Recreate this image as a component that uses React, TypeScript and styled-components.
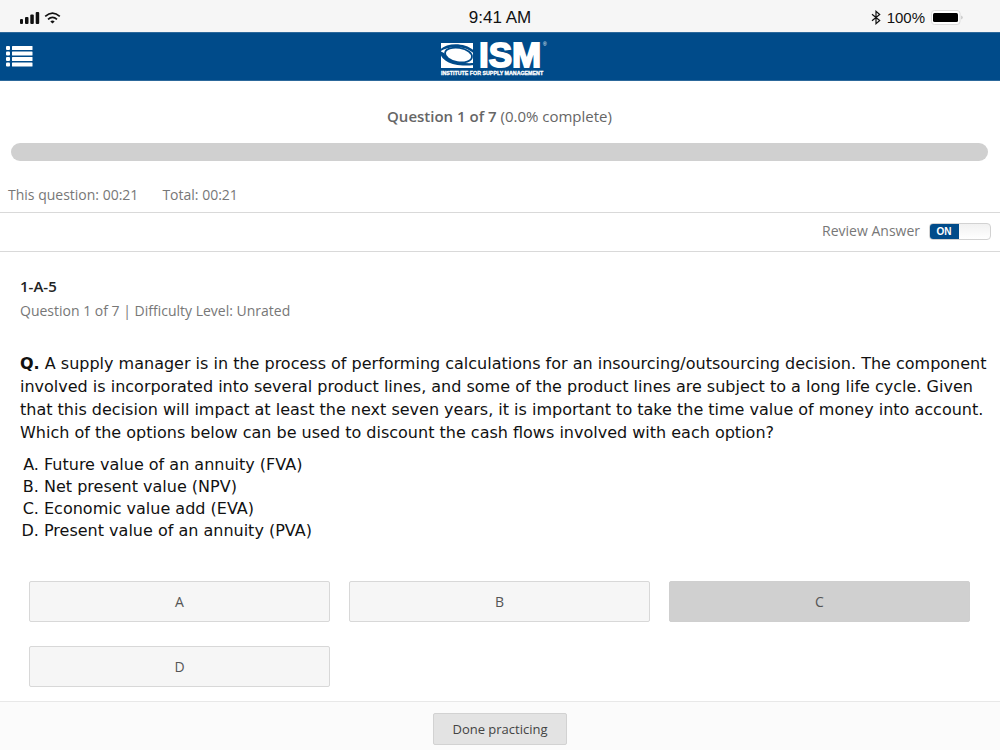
import React, { useState } from "react";
import styled, { createGlobalStyle } from "styled-components";

const GlobalStyle = createGlobalStyle`
  *, *::before, *::after { box-sizing: border-box; }
  body {
    margin: 0;
    background: #fff;
    color: #666;
    font-family: "Open Sans", "Noto Sans", sans-serif;
    font-size: 14px;
    line-height: 20px;
  }
  button { font-family: inherit; cursor: pointer; }
`;

const Page = styled.div`
  display: flex;
  flex-direction: column;
  min-height: 100vh;
`;

const StatusBar = styled.div`
  display: grid;
  grid-template-columns: 1fr auto 1fr;
  align-items: center;
  height: 32px;
  padding-top: 3px;
  background: #f6f6f6;
  color: #111;
  font-family: "Liberation Sans", Arial, sans-serif;
`;

const StatusGroup = styled.div<{ $end?: boolean }>`
  display: flex;
  align-items: center;
  gap: ${(p) => (p.$end ? 6 : 4)}px;
  padding: ${(p) => (p.$end ? "0 36px 0 0" : "0 0 0 19px")};
  justify-content: ${(p) => (p.$end ? "flex-end" : "flex-start")};
`;

const Clock = styled.span`
  font-size: 17px;
`;

const Charge = styled.span`
  font-size: 15px;
`;

const Header = styled.header`
  display: grid;
  grid-template-columns: 1fr auto 1fr;
  align-items: center;
  height: 49px;
  padding: 0 6px;
  background: #004b8a;
  border-top: 1px solid #2c689b;
  border-bottom: 1px solid #2c689b;
`;

const MenuButton = styled.button`
  justify-self: start;
  display: flex;
  padding: 0;
  border: 0;
  background: none;
`;

const Logo = styled.a`
  display: flex;
  color: #fff;
  svg { overflow: visible; }
`;

const Progress = styled.section`
  display: flex;
  flex-direction: column;
  align-items: center;
  gap: 17px;
  padding: 25px 12px 24px 11px;
`;

const ProgressLabel = styled.label`
  color: #666;
  font-size: 15px;
  strong { font-weight: 600; }
`;

const ProgressBar = styled.progress`
  appearance: none;
  display: block;
  width: 100%;
  height: 18px;
  border: 0;
  border-radius: 9px;
  overflow: hidden;
  background: #d0d0d0;
  &::-webkit-progress-bar { background: #d0d0d0; }
  &::-webkit-progress-value { background: #004b8a; }
`;

const Timers = styled.div`
  display: flex;
  gap: 24px;
  padding: 0 8px 7px;
  border-bottom: 1px solid #d9d9d9;
  color: #777;
`;

const ReviewRow = styled.div`
  display: flex;
  justify-content: flex-end;
  align-items: center;
  gap: 9px;
  height: 39px;
  padding: 0 9px 2px 0;
  border-bottom: 1px solid #d9d9d9;
  color: #777;
`;

const Switch = styled.span<{ $on: boolean }>`
  position: relative;
  display: flex;
  flex-direction: ${(p) => (p.$on ? "row" : "row-reverse")};
  width: 62px;
  height: 17px;
  border: 1px solid #d2d2d2;
  border-radius: 4px;
  overflow: hidden;
  background: linear-gradient(#f1f1f1, #fff);
`;

const SwitchInput = styled.input`
  position: absolute;
  inset: 0;
  width: 100%;
  height: 100%;
  margin: 0;
  opacity: 0;
  cursor: pointer;
`;

const SwitchText = styled.span<{ $on: boolean }>`
  width: 30px;
  margin: -1px 0 -1px -1px;
  background: ${(p) => (p.$on ? "#004b8a" : "#999")};
  color: #fff;
  font-family: "Liberation Sans", Arial, sans-serif;
  font-size: 10px;
  font-weight: 700;
  line-height: 17px;
  text-align: center;
`;

const Main = styled.main`
  flex: 1;
  padding: 24px 10px 14px 20px;
`;

const Code = styled.h1`
  margin: 0;
  color: #222;
  font-size: 15px;
  font-weight: 600;
  line-height: 20px;
`;

const Meta = styled.p`
  margin: 5px 0 0;
  color: #777;
`;

const Question = styled.p`
  margin: 31px 0 0;
  color: #111;
  font-family: Verdana, "DejaVu Sans", sans-serif;
  font-size: 16px;
  line-height: 23px;
`;

const Options = styled.ol`
  margin: 10px 0 39px;
  padding: 0 0 0 24px;
  list-style: upper-alpha;
  color: #111;
  font-family: Verdana, "DejaVu Sans", sans-serif;
  font-size: 16px;
  line-height: 22px;
`;

const Answers = styled.div`
  display: grid;
  grid-template-columns: repeat(3, 1fr);
  gap: 24px 19px;
  padding: 0 20px 0 9px;
`;

const AnswerButton = styled.button<{ $selected: boolean }>`
  height: 41px;
  padding: 0;
  border: 1px solid ${(p) => (p.$selected ? "#cfcfcf" : "#d8d8d8")};
  border-radius: 2px;
  background: ${(p) => (p.$selected ? "#d0d0d0" : "#f6f6f6")};
  color: #555;
  font-size: 14px;
`;

const Footer = styled.footer`
  display: flex;
  justify-content: center;
  padding: 11px 0 5px;
  border-top: 1px solid #e8e8e8;
  background: #fbfbfb;
`;

const DoneButton = styled.button`
  height: 32px;
  padding: 0 18px;
  border: 1px solid #d2d2d2;
  border-radius: 2px;
  background: #e3e3e3;
  color: #444;
  font-size: 13px;
`;

const SignalIcon = () => (
  <svg width="21" height="12" viewBox="0 0 21 12" fill="#111" aria-hidden="true">
    <rect x="1" y="7" width="3" height="5" rx="1" />
    <rect x="6" y="5" width="3.5" height="7" rx="1" />
    <rect x="11.3" y="2.5" width="3.5" height="9.5" rx="1" />
    <rect x="16.7" y="0" width="3.5" height="12" rx="1" />
  </svg>
);

const WifiIcon = () => (
  <svg width="17" height="12" viewBox="0 0 17 12" fill="none" stroke="#111" strokeWidth="1.7" aria-hidden="true">
    <path d="M1.2 4.3Q8.5-2.2 15.8 4.3" />
    <path d="M4 7.4Q8.5 3.4 13 7.4" />
    <path d="M8.5 11.6L6.3 9.4Q8.5 7.8 10.7 9.4Z" fill="#111" stroke="none" />
  </svg>
);

const BluetoothIcon = () => (
  <svg width="10" height="15" viewBox="0 0 10 15" fill="none" stroke="#111" strokeWidth="1.2" aria-hidden="true">
    <path d="M1 4.2L8.7 10.5L5 13.7V1.3L8.7 4.5L1 10.8" />
  </svg>
);

const BatteryIcon = () => (
  <svg width="33" height="16" viewBox="0 0 33 16" aria-hidden="true">
    <rect x="0.5" y="0.5" width="28.5" height="14" rx="3" fill="#fff" stroke="#dcdcdc" />
    <rect x="2" y="3" width="25" height="9" rx="1.5" fill="#000" />
    <path d="M30.5 5.5Q32.5 7.5 30.5 9.5Z" fill="#aaa" />
  </svg>
);

const ListIcon = () => (
  <svg width="27" height="21" viewBox="0 0 27 21" fill="#fff" aria-hidden="true">
    {[0, 5.5, 11, 16.5].map((y) => (
      <g key={y}>
        <rect x="0" y={y} width="4" height="4" rx="1" />
        <rect x="6" y={y} width="20.5" height="4" rx="0.5" />
      </g>
    ))}
  </svg>
);

const IsmLogo = () => (
  <svg width="120" height="40" viewBox="0 -4 120 40" aria-hidden="true">
    <rect x="1" y="2" width="32" height="25" fill="#fff" />
    <path d="M0 8.5C8 1.5 24 1.5 34 9.5V12.5C25 4.5 10 4 0 10.5Z" fill="#004b8a" />
    <path d="M0 10C0 20 14 26.5 34 24V22C20 23 7 19.5 4 12Z" fill="#004b8a" />
    <ellipse cx="18.5" cy="14" rx="13.6" ry="7.2" transform="rotate(9 18.5 14)" fill="#fff" stroke="#004b8a" strokeWidth="1.8" />
    <text x="39" y="26" fontFamily='"Liberation Sans", Arial, sans-serif' fontSize="35" fontWeight="700" fill="#fff" stroke="#fff" strokeWidth="1.8">
      ISM
    </text>
    <text x="103" y="5" fontFamily='"Liberation Sans", Arial, sans-serif' fontSize="5" fill="#fff">
      ®
    </text>
    <text x="1" y="34" fontFamily='"Liberation Sans", Arial, sans-serif' fontSize="5.3" fontWeight="700" fill="#fff" stroke="#fff" strokeWidth="0.3">
      INSTITUTE FOR SUPPLY MANAGEMENT
    </text>
  </svg>
);

const options = [
  "Future value of an annuity (FVA)",
  "Net present value (NPV)",
  "Economic value add (EVA)",
  "Present value of an annuity (PVA)",
];

export default function App() {
  const [review, setReview] = useState(true);
  const [selected, setSelected] = useState("C");

  return (
    <Page>
      <GlobalStyle />
      <StatusBar>
        <StatusGroup>
          <SignalIcon />
          <WifiIcon />
        </StatusGroup>
        <Clock>9:41 AM</Clock>
        <StatusGroup $end>
          <BluetoothIcon />
          <Charge>100%</Charge>
          <BatteryIcon />
        </StatusGroup>
      </StatusBar>

      <Header>
        <MenuButton type="button" aria-label="Menu">
          <ListIcon />
        </MenuButton>
        <Logo href="#" aria-label="ISM home">
          <IsmLogo />
        </Logo>
      </Header>

      <Progress>
        <ProgressLabel htmlFor="progress">
          <strong>Question 1 of 7</strong> (0.0% complete)
        </ProgressLabel>
        <ProgressBar id="progress" max={100} value={0} />
      </Progress>

      <Timers>
        <span>This question: 00:21</span>
        <span>Total: 00:21</span>
      </Timers>

      <ReviewRow>
        <label htmlFor="review">Review Answer</label>
        <Switch $on={review}>
          <SwitchText $on={review}>{review ? "ON" : "OFF"}</SwitchText>
          <SwitchInput
            id="review"
            type="checkbox"
            checked={review}
            onChange={(e) => setReview(e.target.checked)}
          />
        </Switch>
      </ReviewRow>

      <Main>
        <Code>1-A-5</Code>
        <Meta>Question 1 of 7 | Difficulty Level: Unrated</Meta>
        <Question>
          <strong>Q.</strong> A supply manager is in the process of performing calculations for an
          insourcing/outsourcing decision. The component involved is incorporated into several
          product lines, and some of the product lines are subject to a long life cycle. Given that
          this decision will impact at least the next seven years, it is important to take the time
          value of money into account. Which of the options below can be used to discount the cash
          flows involved with each option?
        </Question>
        <Options>
          {options.map((text) => (
            <li key={text}>{text}</li>
          ))}
        </Options>
        <Answers>
          {["A", "B", "C", "D"].map((letter) => (
            <AnswerButton
              key={letter}
              type="button"
              aria-pressed={selected === letter}
              $selected={selected === letter}
              onClick={() => setSelected(letter)}
            >
              {letter}
            </AnswerButton>
          ))}
        </Answers>
      </Main>

      <Footer>
        <DoneButton type="button">Done practicing</DoneButton>
      </Footer>
    </Page>
  );
}
